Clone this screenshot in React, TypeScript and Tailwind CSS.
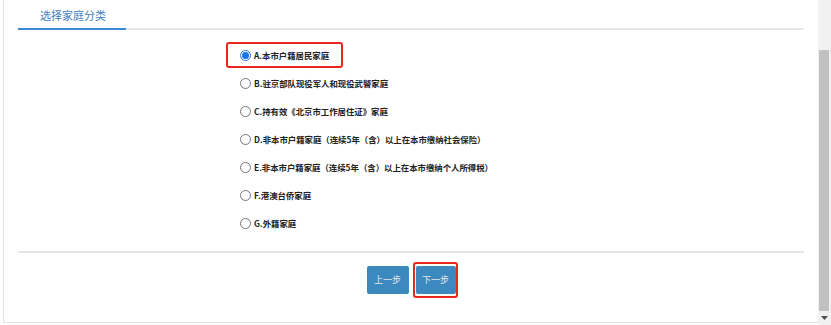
import { useState } from "react";

const options = [
  "A.本市户籍居民家庭",
  "B.驻京部队现役军人和现役武警家庭",
  "C.持有效《北京市工作居住证》家庭",
  "D.非本市户籍家庭（连续5年（含）以上在本市缴纳社会保险）",
  "E.非本市户籍家庭（连续5年（含）以上在本市缴纳个人所得税）",
  "F.港澳台侨家庭",
  "G.外籍家庭",
];

function Radio({ checked }: { checked: boolean }) {
  return checked ? (
    <span className="flex h-[11px] w-[11px] shrink-0 items-center justify-center rounded-full border border-[#1a73e8] bg-white">
      <span className="h-[7px] w-[7px] rounded-full bg-[#1a73e8]" />
    </span>
  ) : (
    <span className="h-[11px] w-[11px] shrink-0 rounded-full border border-[#767676] bg-white" />
  );
}

export default function App() {
  const [selected, setSelected] = useState(0);

  return (
    <div className="flex h-[325px] w-[831px] bg-white font-['Noto_Sans_CJK_SC',sans-serif]">
      <div className="ml-[3px] h-[323px] flex-1 border-b border-l border-[#e3e3e3] px-[14px]">
        <div className="flex h-[30px] border-b-2 border-[#e6e6e6]">
          <div className="-mb-[2px] flex w-[108px] items-center border-b-2 border-[#3a8bd3] pl-[22px] pt-[2px] text-[11px] text-[#3f80c0]">
            选择家庭分类
          </div>
        </div>

        <div className="ml-[222px] pt-[11px] pb-[14px]">
          {options.map((label, i) => (
            <div
              key={label}
              className="relative flex h-[28px] cursor-pointer items-center gap-[3px]"
              onClick={() => setSelected(i)}
            >
              <Radio checked={selected === i} />
              <span className="whitespace-nowrap text-[8.4px] font-bold text-[#222]">{label}</span>
              {i === 0 && (
                <span className="absolute -left-[14px] top-[1px] h-[26px] w-[117px] rounded-[3px] border-2 border-[#e8271f]" />
              )}
            </div>
          ))}
        </div>

        <div className="flex items-start justify-center gap-[7px] border-t-2 border-[#e6e6e6] pt-[13px]">
          <button className="h-[28px] w-[42px] rounded-[2px] bg-[#3c89c0] text-[9px] text-[#e6e6e6]">
            上一步
          </button>
          <div className="relative flex">
            <button className="h-[28px] w-[40px] rounded-[2px] bg-[#3c89c0] text-[9px] text-[#e6e6e6]">
              下一步
            </button>
            <span className="absolute -left-[3px] -top-[4px] h-[36px] w-[45px] rounded-[3px] border-2 border-[#e8271f]" />
          </div>
        </div>
      </div>

      <div className="flex h-[325px] w-[13px] flex-col bg-[#f1f1f1] pl-[1px]">
        <div className="mt-[50px] h-[261px] w-[10px] bg-[#c1c1c1]" />
        <div className="flex flex-1 items-center justify-center pr-[1px]">
          <svg width="7" height="4" viewBox="0 0 7 4">
            <path d="M0 0h7L3.5 4z" fill="#505050" />
          </svg>
        </div>
      </div>
    </div>
  );
}
